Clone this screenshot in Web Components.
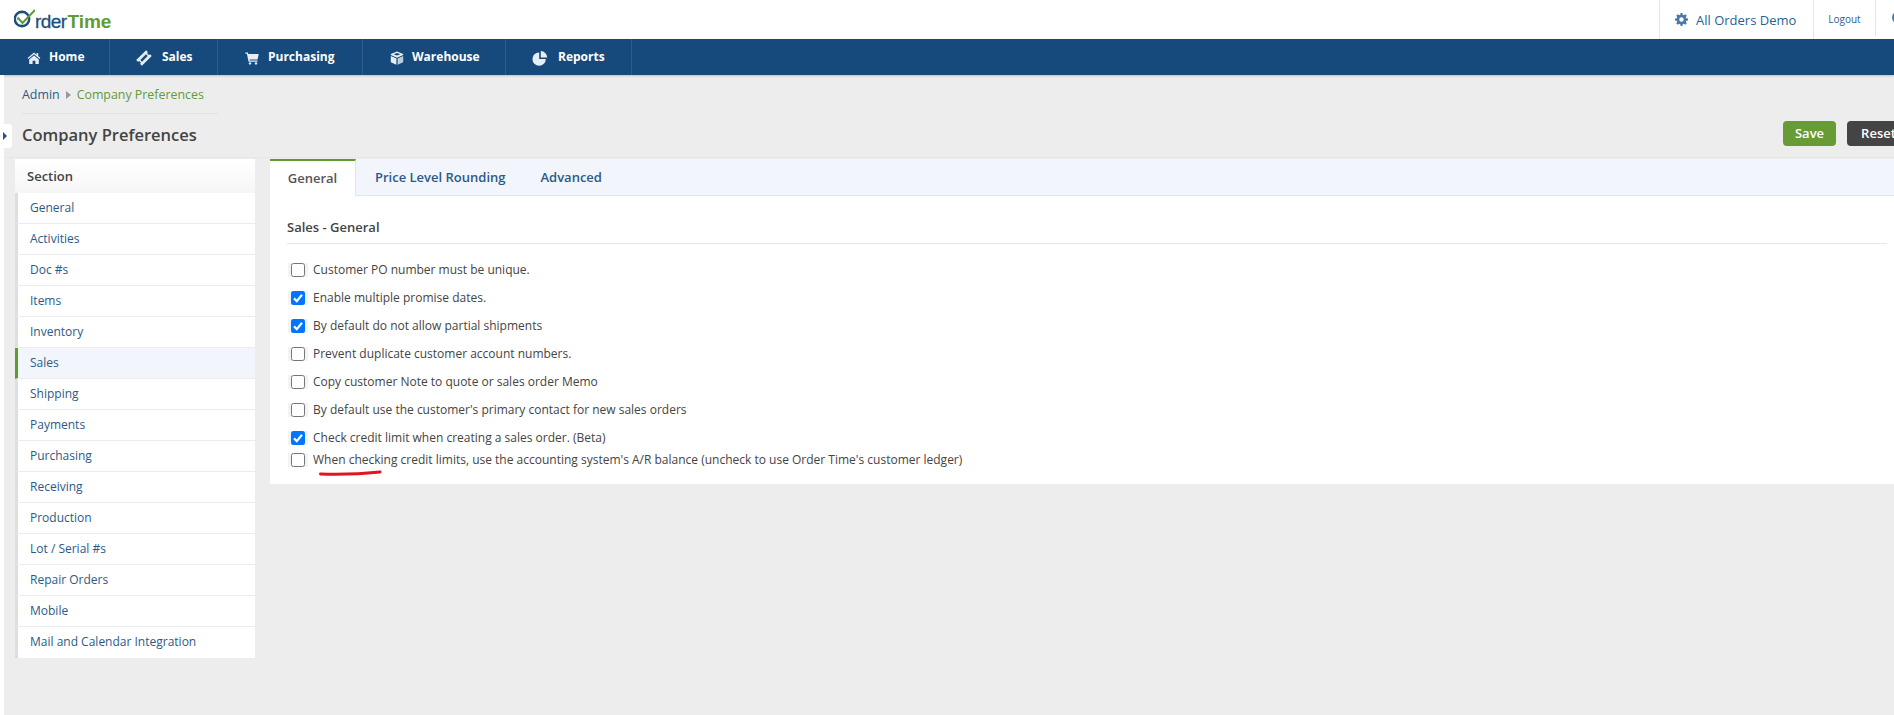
<!DOCTYPE html>
<html>
<head>
<meta charset="utf-8">
<title>Company Preferences</title>
<style>
  html, body { margin: 0; height: 100%; overflow: hidden; }
  body { font-family: "Open Sans", sans-serif; font-size: 12px; color: #444; background: #ededed; width: 1894px; height: 715px; }
</style>
</head>
<body>
<ot-topbar>
  <ot-nav-item icon="home" gap="8">Home</ot-nav-item>
  <ot-nav-item icon="tag" width="108" gap="11">Sales</ot-nav-item>
  <ot-nav-item icon="cart" width="145" gap="9">Purchasing</ot-nav-item>
  <ot-nav-item icon="box" width="143" gap="8">Warehouse</ot-nav-item>
  <ot-nav-item icon="pie" width="126" gap="11">Reports</ot-nav-item>
</ot-topbar>
<ot-page>
  <ot-section-list slot="side">
    <ot-section-item>General</ot-section-item>
    <ot-section-item>Activities</ot-section-item>
    <ot-section-item>Doc #s</ot-section-item>
    <ot-section-item>Items</ot-section-item>
    <ot-section-item>Inventory</ot-section-item>
    <ot-section-item active>Sales</ot-section-item>
    <ot-section-item>Shipping</ot-section-item>
    <ot-section-item>Payments</ot-section-item>
    <ot-section-item>Purchasing</ot-section-item>
    <ot-section-item>Receiving</ot-section-item>
    <ot-section-item>Production</ot-section-item>
    <ot-section-item>Lot / Serial #s</ot-section-item>
    <ot-section-item>Repair Orders</ot-section-item>
    <ot-section-item>Mobile</ot-section-item>
    <ot-section-item>Mail and Calendar Integration</ot-section-item>
  </ot-section-list>
  <ot-settings slot="main">
    <ot-check>Customer PO number must be unique.</ot-check>
    <ot-check checked>Enable multiple promise dates.</ot-check>
    <ot-check checked>By default do not allow partial shipments</ot-check>
    <ot-check>Prevent duplicate customer account numbers.</ot-check>
    <ot-check>Copy customer Note to quote or sales order Memo</ot-check>
    <ot-check>By default use the customer's primary contact for new sales orders</ot-check>
    <ot-check checked>Check credit limit when creating a sales order. (Beta)</ot-check>
    <ot-check tight marked>When checking credit limits, use the accounting system's A/R balance (uncheck to use Order Time's customer ledger)</ot-check>
  </ot-settings>
</ot-page>

<script>
const navIcons = {
  home: '<path d="M7 1.5 .6 7l.8 1L7 3.2 12.6 8l.8-1-2.2-1.9V2H9.6v1.7z"/><path d="M2.2 8.6 7 4.5l4.8 4.1V13H8.4V9.8H5.6V13H2.2z"/>',
  tag: '<g transform="rotate(-45 7 7)"><path fill-rule="evenodd" d="M0 3h14v2.4a1.6 1.6 0 0 0 0 3.2V11H0V8.6a1.6 1.6 0 0 0 0-3.2zM3 5.8v2.4h8V5.8z"/></g>',
  cart: '<path d="M.3 1.5h2.6l.4 1.6h10.4l-1.1 5.4H4.6l.2 1h7.6v1.2H3.6L1.9 2.7H.3z"/><circle cx="5" cy="12.4" r="1.2"/><circle cx="11" cy="12.4" r="1.2"/>',
  box: '<path fill-rule="evenodd" d="M7 .4 13.2 3v1.1L7 6.7.8 4.1V3zM7 1.9 3.7 3.2 7 4.6l3.3-1.4z"/><path d="M.8 5.1 6.4 7.5v6.3L.8 11.2z"/><path opacity=".8" d="M13.2 5.1 7.6 7.5v6.3l5.6-2.6z"/>',
  pie: '<path d="M6.2 1.4V8h6.6A6.7 6.7 0 1 1 6.2 1.4z"/><path d="M7.8 0a6.6 6.6 0 0 1 6.4 6.4H7.8z"/>'
};

const topbarTemplate = document.createElement("template");
topbarTemplate.innerHTML = `
<style>
  :host { display: block; }
  header { display: flex; height: 39px; background: #fff; justify-content: space-between; }
  .logo { display: flex; align-items: center; padding: 0 0 0 14px; height: 39px; }
  .logo svg { flex: none; }
  .logo span { font: 19px/1 "Liberation Sans", sans-serif; letter-spacing: -.6px; margin: 3px 0 0 0; color: #1b4f7e; -webkit-text-stroke: .3px #1b4f7e; }
  .logo b { color: #639b32; font-weight: bold; letter-spacing: 0; margin-left: 1px; -webkit-text-stroke: 0; }
  .right { display: flex; width: 235px; flex: none; }
  .org { width: 154px; flex: none; border-left: 1px solid #e6e6e6; display: flex; align-items: center; padding-left: 15px; box-sizing: border-box; font-size: 13px; color: #2b5f91; gap: 8px; }
  .logout { width: 62px; flex: none; border-left: 1px solid #e6e6e6; font-size: 10px; color: #2b5f91; text-align: center; line-height: 39px; box-sizing: border-box; }
  .more { width: 19px; flex: none; border-left: 1px solid #e6e6e6; height: 36px; padding: 11px 0 0 16px; box-sizing: border-box; overflow: hidden; }
  .more i { display: block; width: 13px; height: 13px; border-radius: 50%; background: #4a78a8; }
  nav { display: flex; height: 36px; background: #164a7c; box-shadow: 0 1px 2px rgba(0,0,0,.2); position: relative; }
</style>
<header>
  <div class="logo">
    <svg width="21" height="22" viewBox="0 0 21 22">
      <circle cx="8" cy="10" r="7.2" fill="none" stroke="#1b4f7e" stroke-width="2.4"/>
      <path d="M3.5 8.5 8.5 14 21 1" fill="none" stroke="#639b32" stroke-width="2"/>
      <path d="M8 4.2v1.2M3 10.5h1M12 10.5h1M8 15v1" stroke="#639b32" stroke-width=".9"/>
    </svg>
    <span>rder<b>Time</b></span>
  </div>
  <div class="right">
    <div class="org">
      <svg width="13" height="13" viewBox="0 0 14 14" fill="#4a78a8"><path fill-rule="evenodd" d="M6 0h2l.3 1.9 1.2.5L11 1.3l1.7 1.7-1.1 1.5.5 1.2L14 6v2l-1.9.3-.5 1.2 1.1 1.5-1.7 1.7-1.5-1.1-1.2.5L8 14H6l-.3-1.9-1.2-.5L3 12.7 1.3 11l1.1-1.5-.5-1.2L0 8V6l1.9-.3.5-1.2L1.3 3 3 1.3l1.5 1.1 1.2-.5zM7 4.6a2.4 2.4 0 1 0 0 4.8 2.4 2.4 0 0 0 0-4.8z"/></svg>
      All Orders Demo
    </div>
    <div class="logout">Logout</div>
    <div class="more"><i></i></div>
  </div>
</header>
<nav><slot></slot></nav>
`;
class OtTopbar extends HTMLElement {
  constructor() {
    super();
    this.attachShadow({ mode: "open" }).append(topbarTemplate.content.cloneNode(true));
  }
}
customElements.define("ot-topbar", OtTopbar);

class OtNavItem extends HTMLElement {
  constructor() {
    super();
    const w = this.getAttribute("width") || 110;
    const gap = this.getAttribute("gap") || 9;
    const icon = navIcons[this.getAttribute("icon")];
    this.attachShadow({ mode: "open" }).innerHTML = `
      <style>
        :host { display: flex; align-items: center; gap: ${gap}px; height: 36px; box-sizing: border-box; padding: 0 0 2px 27px;
          width: ${w}px; border-right: 1px solid #2c5c8a; color: #fff; font-weight: bold; font-size: 12px; }
        svg { fill: #e6edf3; flex: none; margin-top: 3px; overflow: visible; }
      </style>
      <svg width="14" height="14" viewBox="0 0 14 14">${icon}</svg><slot></slot>`;
  }
}
customElements.define("ot-nav-item", OtNavItem);

const pageTemplate = document.createElement("template");
pageTemplate.innerHTML = `
<style>
  :host { display: block; height: 640px; border-left: 4px solid #fff; box-sizing: border-box; position: relative; }
  .crumbs { margin-left: 18px; width: 196px; height: 39px; box-sizing: border-box; padding-top: 11px; border-bottom: 1px solid #e2e2e2; font-size: 12.4px; line-height: 18px; color: #2c5a88; white-space: nowrap; }
  .crumbs em { font-style: normal; color: #659a3c; }
  .crumbs i { display: inline-block; border: 4px solid transparent; border-left: 5px solid #999; border-right: 0; margin: 0 6px; }
  .head { display: flex; justify-content: space-between; height: 44px; padding: 7px 0 0 18px; box-sizing: border-box; border-bottom: 1px solid #e6e6e6; }
  h1 { margin: 0; font-size: 16.5px; line-height: 28px; font-weight: 600; color: #444; }
  .btns { display: flex; gap: 11px; margin-right: -16px; }
  .btn { height: 25px; border-radius: 4px; color: #fff; font-weight: 600; font-size: 13px; line-height: 25px; text-align: center; box-sizing: border-box; }
  .save { width: 53px; background: #669b35; }
  .reset { width: 63px; background: #444; }
  .toggle { position: absolute; left: -4px; top: 49px; width: 12px; height: 24px; background: #fff; border-radius: 0 3px 3px 0; }
  .toggle::after { content: ""; position: absolute; left: 3px; top: 8px; border: 4px solid transparent; border-left: 4px solid #1f5586; border-right: 0; }
  .body { display: flex; gap: 15px; padding: 1px 0 0 11px; align-items: flex-start; }
</style>
<div class="toggle"></div>
<div class="crumbs">Admin<i></i><em>Company Preferences</em></div>
<div class="head">
  <h1>Company Preferences</h1>
  <div class="btns"><div class="btn save">Save</div><div class="btn reset">Reset</div></div>
</div>
<div class="body"><slot name="side"></slot><slot name="main"></slot></div>
`;
class OtPage extends HTMLElement {
  constructor() {
    super();
    this.attachShadow({ mode: "open" }).append(pageTemplate.content.cloneNode(true));
  }
}
customElements.define("ot-page", OtPage);

class OtSectionList extends HTMLElement {
  constructor() {
    super();
    this.attachShadow({ mode: "open" }).innerHTML = `
      <style>
        :host { display: block; width: 240px; flex: none; }
        .title { height: 34px; padding-left: 12px; line-height: 34px; font-size: 13px; font-weight: 600; color: #444; background: linear-gradient(#fff, #f6f6f6); }
      </style>
      <div class="title">Section</div><slot></slot>`;
  }
}
customElements.define("ot-section-list", OtSectionList);

class OtSectionItem extends HTMLElement {
  constructor() {
    super();
    this.attachShadow({ mode: "open" }).innerHTML = `
      <style>
        :host { display: block; height: 31px; box-sizing: border-box; padding-left: 12px; line-height: 29px; font-size: 12px; color: #2c5a88;
          background: #fff; border-left: 3px solid #dedede; border-bottom: 1px solid #ececec; }
        :host(:last-child) { border-bottom: 0; }
        :host([active]) { background: #f2f6fc; border-left-color: #5f9a2e; }
      </style><slot></slot>`;
  }
}
customElements.define("ot-section-item", OtSectionItem);

const settingsTemplate = document.createElement("template");
settingsTemplate.innerHTML = `
<style>
  :host { display: block; width: 1640px; background: #fff; height: 325px; }
  .tabs { display: flex; height: 37px; background: #f2f5fb; border-bottom: 1px solid #dfe5ee; box-sizing: border-box; font-size: 13px; font-weight: 600; color: #2c5a88; }
  .tabs div { padding: 0 18px 0 19px; line-height: 36px; }
  .tabs .on { width: 86px; box-sizing: border-box; height: 37px; background: #fff; color: #555; border-top: 2px solid #5f9a2e; border-right: 1px solid #dfe5ee; text-align: center; padding: 0; line-height: 35px; }
  h2 { margin: 0 0 0 17px; width: 1600px; height: 48px; box-sizing: border-box; padding-top: 22px; border-bottom: 1px solid #e6e6e6; font-size: 13px; line-height: 18px; font-weight: 600; color: #444; }
  .rows { padding: 11px 0 0 17px; }
</style>
<div class="tabs"><div class="on">General</div><div>Price Level Rounding</div><div style="padding-left:17px">Advanced</div></div>
<h2>Sales - General</h2>
<div class="rows"><slot></slot></div>
`;
class OtSettings extends HTMLElement {
  constructor() {
    super();
    this.attachShadow({ mode: "open" }).append(settingsTemplate.content.cloneNode(true));
  }
}
customElements.define("ot-settings", OtSettings);

class OtCheck extends HTMLElement {
  constructor() {
    super();
    const on = this.hasAttribute("checked");
    this.attachShadow({ mode: "open" }).innerHTML = `
      <style>
        :host { display: flex; align-items: center; height: 28px; font-size: 12px; color: #444; position: relative; }
        :host([tight]) { height: 16px; }
        .wrap { width: 20px; height: 14px; background: #f3f3f3; display: flex; justify-content: center; margin: 0 5px 0 1px; position: relative; top: 1px; }
        .box { width: 14px; height: 14px; box-sizing: border-box; border-radius: 2.5px; border: 1px solid #767676; background: #fff; }
        .box.on { background: #0075ff; border: 0; }
        .box svg { display: block; }
        .mark { position: absolute; left: 32px; top: 19px; }
      </style>
      <div class="wrap"><div class="box ${on ? "on" : ""}">${on ? '<svg width="14" height="14" viewBox="0 0 14 14"><path d="M3 7.4 5.8 10.2 11 3.8" fill="none" stroke="#fff" stroke-width="2.2"/></svg>' : ""}</div></div>
      <span><slot></slot></span>
      ${this.hasAttribute("marked") ? '<svg class="mark" width="63" height="6" viewBox="0 0 63 6"><path d="M1.5 4C15 4.4 40 4.2 61 2" fill="none" stroke="#e3141c" stroke-width="3" stroke-linecap="round"/></svg>' : ""}`;
  }
}
customElements.define("ot-check", OtCheck);
</script>
</body>
</html>
